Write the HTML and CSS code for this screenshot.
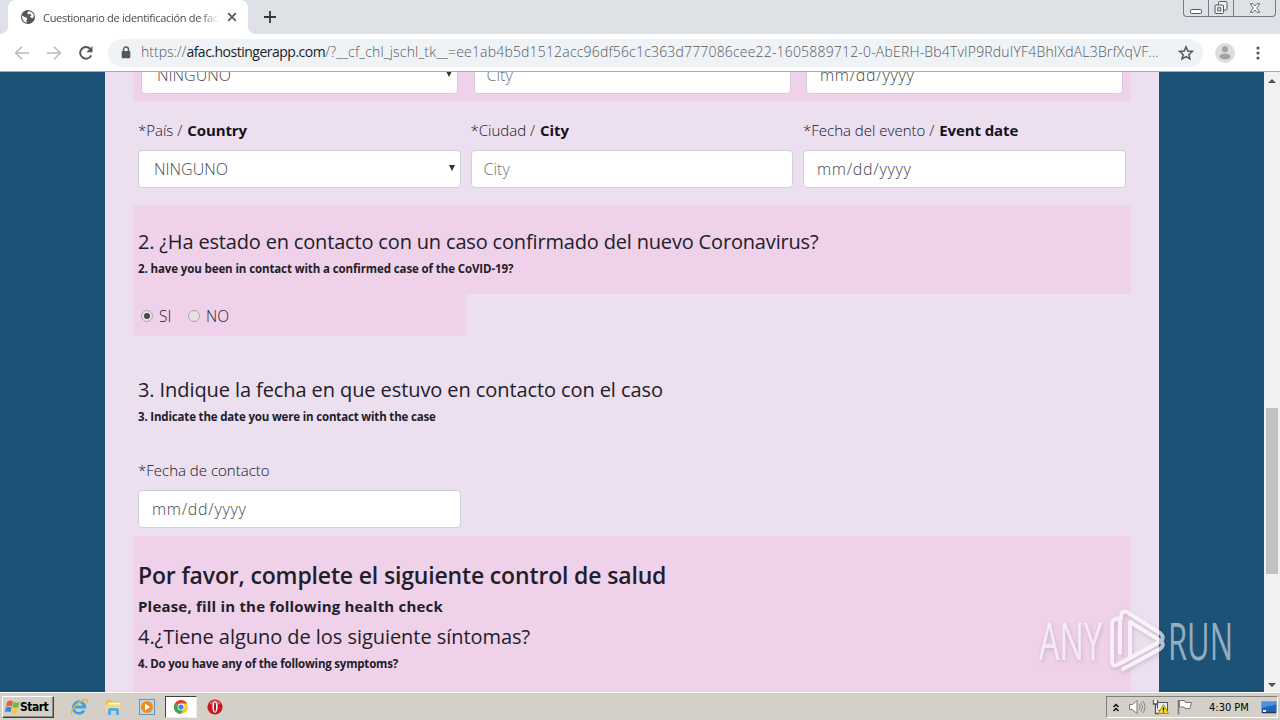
FILE: index.html
```html
<!DOCTYPE html>
<html lang="es">
<head>
<meta charset="utf-8">
<title>Cuestionario de identificación de factores</title>
<link rel="stylesheet" href="styles.css">
</head>
<body>
<div class="screen">
  <header class="tabstrip">
    <div class="tab-lead"></div>
    <div class="tab">
      <svg class="globe" viewBox="0 0 16 16"><circle cx="8" cy="8" r="7" fill="#55585c"/><path d="M2 6.500 4.600 8l2 .6.6 1.600-.8 1.300.4 2.200-1.600-.5C3.200 12 2 9.800 2 6.500ZM8.200 2.200l-1 2 1.600 1.200 1.600-.6 1 1.400-1.400 1.500 1.600 1.300 1.800-.2.400-2.600C13.300 4 11 2.200 8.200 2.200Z" fill="#fff"/></svg>
      <span class="tab-title">Cuestionario de identificación de fact</span>
      <svg class="tab-close" viewBox="0 0 10 10"><path d="M1.200 1.200l7.600 7.600M8.800 1.200 1.200 8.800" stroke="#55595d" stroke-width="1.700"/></svg>
    </div>
    <div class="tab-rest">
      <svg class="plus" viewBox="0 0 12 12"><path d="M6 0v12M0 6h12" stroke="#34383c" stroke-width="1.800"/></svg>
      <div class="winbtns">
        <span class="wb min"><svg viewBox="0 0 14 14"><rect x="1.500" y="8.500" width="11" height="4" rx="1" fill="#fff" stroke="#53565e"/></svg></span>
        <span class="wb"><svg viewBox="0 0 14 14"><g fill="#f2f3f6" stroke="#53565e"><rect x="4.500" y=".5" width="8.500" height="8.500" rx="1"/><rect x="1" y="4" width="8.500" height="8.500" rx="1"/><rect x="3.800" y="6.800" width="3" height="3"/></g></svg></span>
        <span class="wb close"><svg viewBox="0 0 14 14"><path d="M1.500 2h3.200L7 4.700 9.300 2h3.200L9 7l3.500 5H9.300L7 9.300 4.700 12H1.500L5 7Z" fill="#fff" stroke="#53565e"/></svg></span>
      </div>
    </div>
  </header>
  <nav class="toolbar">
    <svg class="nav" viewBox="0 0 16 16"><path d="M15 8H2M8 1.700 1.700 8 8 14.300" fill="none" stroke="#b9babc" stroke-width="1.600"/></svg>
    <svg class="nav" viewBox="0 0 16 16"><path d="M1 8h13M8 1.700 14.300 8 8 14.300" fill="none" stroke="#b9babc" stroke-width="1.600"/></svg>
    <svg class="nav" viewBox="0 0 16 16"><path d="M13.200 10.300A5.800 5.800 0 1 1 12.300 4" fill="none" stroke="#54585c" stroke-width="2"/><path d="M14.500 1v6.200H8.300Z" fill="#54585c"/></svg>
    <div class="omnibox">
      <svg class="lock" viewBox="0 0 10 13"><path d="M2.500 6V3.500a2.500 2.500 0 0 1 5 0V6" fill="none" stroke="#54585c" stroke-width="1.400"/><rect x=".7" y="5" width="8.600" height="7.300" rx="1" fill="#54585c"/></svg>
      <span class="url">https://<b>afac.hostingerapp.com</b><span class="query">/?__cf_chl_jschl_tk__=ee1ab4b5d1512acc96df56c1c363d777086cee22-1605889712-0-AbERH-Bb4TvIP9RduIYF4BhIXdAL3BrfXqVF…</span></span>
      <svg class="star" viewBox="0 0 16 16"><path d="m8 1.800 1.750 4.300 4.650.35-3.550 3 1.100 4.550L8 11.550 4.050 14l1.100-4.550-3.550-3 4.650-.35Z" fill="none" stroke="#54585c" stroke-width="1.500"/></svg>
    </div>
    <svg class="avatar" viewBox="0 0 20 20"><circle cx="10" cy="10" r="10" fill="#dcdddf"/><circle cx="10" cy="6.200" r="3" fill="#a2a3a5"/><ellipse cx="10" cy="13.500" rx="5.500" ry="3" fill="#a2a3a5"/></svg>
    <svg class="dots" viewBox="0 0 4 14"><g fill="#54585c"><circle cx="2" cy="2" r="1.600"/><circle cx="2" cy="7" r="1.600"/><circle cx="2" cy="12" r="1.600"/></g></svg>
  </nav>

  <div class="viewport">
    <div class="side"></div>
    <main class="page">
      <section class="prev pink">
        <div class="field select cut"><span>NINGUNO</span><i></i></div>
        <div class="field ph cut"><span>City</span></div>
        <div class="field date cut"><span>mm/dd/yyyy</span></div>
      </section>
      <section class="event">
        <div><label class="lbl">*País / <b>Country</b></label><div class="field select"><span>NINGUNO</span><i></i></div></div>
        <div><label class="lbl">*Ciudad / <b>City</b></label><div class="field ph"><span>City</span></div></div>
        <div><label class="lbl">*Fecha del evento / <b>Event date</b></label><div class="field date"><span>mm/dd/yyyy</span></div></div>
      </section>
      <section class="q2 pink">
        <h3 class="t2">2. ¿Ha estado en contacto con un caso confirmado del nuevo Coronavirus?</h3>
        <h6 class="s2">2. have you been in contact with a confirmed case of the CoVID-19?</h6>
      </section>
      <section class="radios pink">
        <span class="radio on"></span><span class="rl">SI</span>
        <span class="radio"></span><span class="rl">NO</span>
      </section>
      <section class="q3">
        <h3 class="t3">3. Indique la fecha en que estuvo en contacto con el caso</h3>
        <h6 class="s3">3. Indicate the date you were in contact with the case</h6>
        <label class="lbl">*Fecha de contacto</label>
        <div class="field date"><span>mm/dd/yyyy</span></div>
      </section>
      <section class="q4 pink">
        <h2>Por favor, complete el siguiente control de salud</h2>
        <h5>Please, fill in the following health check</h5>
        <h3 class="t5">4.¿Tiene alguno de los siguiente síntomas?</h3>
        <h6 class="s5">4. Do you have any of the following symptoms?</h6>
      </section>
    </main>
    <div class="side"></div>
    <div class="scroll"><i class="up"></i><div class="thumb"></div><i class="down"></i></div>
    <div class="mark">
      <svg width="210" height="80" viewBox="0 0 210 80">
        <g fill="#fff" font-family="'Open Sans'" font-size="51">
          <text class="wm shade" x="7" y="57.500" textLength="63" lengthAdjust="spacingAndGlyphs">ANY</text>
          <text class="wm dim" x="136" y="57.500" textLength="65" lengthAdjust="spacingAndGlyphs">RUN</text>
        </g>
        <g class="shade logo" fill="none" stroke="#fff" stroke-width="4" stroke-linejoin="round" stroke-linecap="round">
          <path d="M88 51V20q-1-5-5-3-3 2-3 5v37q0 6 5 4l44-24"/>
          <path d="M89 17v-3q0-6 6-4l33 21q5 4 1 8L98 20v34"/>
          <path d="M91 67l37-20q5-4 1-8L89 61"/>
        </g>
      </svg>
    </div>
  </div>

  <footer class="taskbar">
    <div class="start"><svg viewBox="0 0 16 16"><path d="M2.500 2.500q3-2.500 6-.5L7.300 7.500q-3-1.800-6.300 0Z" fill="#e9602f"/><path d="M9.300 2.500q3 2 6.700-.2L14.200 8q-3 1.800-6.200 0Z" fill="#72b843"/><path d="M.8 8.500q3.200-1.800 6.200 0l-1.200 5.200q-3-1.800-5.800 0Z" fill="#3d84d8"/><path d="M7.700 9q3 1.800 6.300 0l-1.500 5.300q-3 1.900-6 0Z" fill="#f6c832"/></svg><b>Start</b></div>
    <div class="quick">
      <svg viewBox="0 0 18 18"><path d="M14 12.500A5.800 5.800 0 1 1 14.800 9H5" fill="none" stroke="#3fa2e4" stroke-width="2.800"/><path d="M2 16.500C-1 13 8 3 15.500 1.500 18 1 17.500 3.500 16.500 5" fill="none" stroke="#e8b83a" stroke-width="1.300"/></svg>
      <svg viewBox="0 0 18 18"><path d="M2 2h5l1 1.500h7V14H2Z" fill="#dfbd58"/><path d="M4 4.500h12v3H4Z" fill="#fff3c0"/><path d="M1.500 6.500h15V14h-15Z" fill="#f3d983"/><path d="M4 17v-5q0-2 2-2h7q2 0 2 2v5h-3v-4H7v4Z" fill="#55aee3"/></svg>
      <svg viewBox="0 0 18 18"><rect x="1.500" y="1.500" width="15" height="15" fill="#b8d9f0" stroke="#5e9ac8"/><circle cx="9" cy="9" r="6" fill="#f48a1b"/><path d="m7 5.500 5 3.500-5 3.500Z" fill="#fff"/></svg>
      <span class="active"><svg viewBox="0 0 18 18"><circle cx="9" cy="9" r="7" fill="#f7cb31"/><path d="M9 9 2.900 5.500A7 7 0 0 1 15.100 5.500H9Z" fill="#dc4335"/><path d="M2.900 5.500A7 7 0 0 0 8.500 16L12 10.800 9 9Z" fill="#3aa457"/><circle cx="9" cy="9" r="3.400" fill="#fff"/><circle cx="9" cy="9" r="2.600" fill="#4482e8"/></svg></span>
      <svg viewBox="0 0 18 18"><circle cx="9" cy="9" r="7.600" fill="#c41920"/><path d="M3.500 5.500a6.500 6.500 0 0 1 11 0Q9 9 3.500 5.500Z" fill="#e46a68"/><ellipse cx="9" cy="9" rx="2.600" ry="5.700" fill="#fff"/><ellipse cx="9" cy="9" rx="1" ry="4.700" fill="#a90f18"/></svg>
    </div>
    <div class="tray">
      <svg class="chev" viewBox="0 0 8 10"><path d="m1.500 4.500 2.500-2.500 2.500 2.500M1.500 8.500 4 6l2.500 2.500" fill="none" stroke="#111" stroke-width="1.500"/></svg>
      <svg class="ti" viewBox="0 0 18 16"><path d="M1.500 5.500h3L9 1.500v13l-4.500-4h-3Z" fill="#fff" stroke="#777"/><path d="M11 5q2 3 0 6M13 3.500q3 4.500 0 9M15 2q4 6 0 12" fill="none" stroke="#888"/></svg>
      <svg class="ti" viewBox="0 0 18 16"><rect x="5.500" y="3.500" width="10" height="8" fill="#e8eef2" stroke="#555"/><path d="M1.500 1v4h4V1M3.500 5v9.500h4" fill="#fff" stroke="#555" stroke-width="1.300"/><path d="m11.500 5.500 5 9h-10Z" fill="#ffdc22" stroke="#b39100"/><path d="M11.500 8.500v3m0 1v1" stroke="#111" stroke-width="1.300"/></svg>
      <svg class="ti" viewBox="0 0 18 16"><path d="M2.500 1v14.500" stroke="#777" stroke-width="1.500"/><path d="M3.500 1.500h5l1 2h6l-1.500 6H9l-1-1.500H3.500Z" fill="#fff" stroke="#777"/></svg>
      <span class="clock">4:30 PM</span>
      <svg class="desk" viewBox="0 0 16 14"><rect x=".5" y="1.500" width="15" height="11" fill="#2463bd" stroke="#7da4c9"/><path d="M1 2h14v2.500L1 8Z" fill="#4b91df"/><path d="M1 12.500h14" stroke="#24394f" stroke-width="1.500"/><path d="M2 10h3v2H2Z" fill="#dceefa"/></svg>
    </div>
  </footer>
</div>
</body>
</html>
```
FILE: styles.css
```css
* { box-sizing: border-box; }
body { margin: 0; background: #1b5276; font-family: "Open Sans", "Noto Sans", sans-serif; color: #212029; }
svg { display: block; flex: none; }
h2, h3, h5, h6, label { display: block; margin: 0; white-space: nowrap; }
.screen { width: 1280px; height: 720px; overflow: hidden; display: flex; flex-direction: column; }

.tabstrip { height: 34px; flex: none; display: flex; background: #fff; }
.tab-lead { width: 8px; background: #dee1e6; border-bottom-right-radius: 7px; }
.tab { width: 240px; display: flex; align-items: center; padding: 0 11px 0 12px; background: #fff; border-radius: 8px 8px 0 0; box-shadow: 0 -8px 0 #dee1e6; }
.globe { width: 16px; height: 16px; }
.tab-title { width: 180px; margin-left: 7px; white-space: nowrap; font-size: 11px; letter-spacing: -.3px; color: #45494d; -webkit-mask-image: linear-gradient(90deg, #000 158px, transparent 176px); mask-image: linear-gradient(90deg, #000 158px, transparent 176px); }
.tab-close { width: 10px; height: 10px; margin-left: 5px; }
.tab-rest { flex: 1; display: flex; justify-content: space-between; background: #dee1e6; border-bottom-left-radius: 7px; padding: 0 4px 0 16px; }
.plus { width: 12px; height: 12px; margin-top: 11px; }
.winbtns { display: flex; height: 17px; border: 1px solid #777b87; border-top: 0; border-radius: 0 0 4px 4px; width: 93px; overflow: hidden; }
.wb { width: 25px; display: flex; justify-content: center; align-items: center; border-right: 1px solid #777b87; }
.wb svg { width: 14px; height: 14px; }
.wb.close { width: 41px; border: 0; }
.wb.close svg { width: 12px; height: 12px; }

.toolbar { height: 38px; flex: none; display: flex; align-items: center; background: #fff; border-bottom: 1px solid #a9aaad; padding: 0 20px 0 14px; }
.nav { width: 16px; height: 16px; margin-right: 16px; }
.omnibox { width: 1095px; height: 28px; margin-left: -2px; border-radius: 14px; background: #f0f3f5; display: flex; align-items: center; padding: 0 9px 0 13px; }
.lock { width: 10px; height: 13px; }
.url { width: 1026px; margin-left: 10px; margin-top: -2px; font-size: 14px; font-weight: 300; white-space: nowrap; color: #55595e; }
.url b { font-weight: 400; color: #202124; letter-spacing: -.5px; }
.query { letter-spacing: .18px; }
.star { width: 16px; height: 16px; margin-left: auto; }
.avatar { width: 20px; height: 20px; margin-left: 12px; }
.dots { width: 4px; height: 14px; margin-left: auto; }

.viewport { height: 620px; flex: none; display: flex; position: relative; overflow: hidden; background: #1b5276; }
.side { width: 105px; }
.page { width: 1054px; background: #ebdff0; padding: 0 28px; }
.pink { background: #efd1ea; }
.prev { height: 29px; display: grid; grid-template-columns: repeat(3, 317px); gap: 15.500px; padding: 0 8px; overflow: hidden; }
.event { height: 104px; padding: 18px 5px 0; display: grid; grid-template-columns: repeat(3, 322.500px); gap: 10px; align-items: start; }
.lbl { font-size: 15px; font-weight: 300; height: 31px; line-height: 22px; color: #16131c; }
.lbl b { font-weight: 700; letter-spacing: -.1px; margin-left: 1px; }
.field { height: 38px; background: #fff; border: 1px solid #d0cfdb; border-radius: 4px; padding: 0 12px; display: flex; align-items: center; justify-content: space-between; font-size: 16px; font-weight: 300; color: #42484e; line-height: 22px; }
.cut { margin-top: -16px; }
.select { padding: 0 5px 0 15px; }
.select i { width: 0; border: 3px solid transparent; border-top: 6px solid #333; border-bottom: 0; margin-top: -2px; }
.date { padding-left: 13px; letter-spacing: .7px; }
.date span { margin-top: -1px; }
.ph { color: #6c757d; }
.q2 { height: 89px; padding: 25px 5px 0; }
h3 { font-size: 20px; font-weight: 400; line-height: 24px; }
h6 { font-size: 11.500px; font-weight: 700; line-height: 14px; margin-top: 8px; }
.t2 { letter-spacing: -.17px; }
.t3 { letter-spacing: -.09px; }
.t5 { letter-spacing: -.05px; }
.s2 { letter-spacing: -.11px; }
.s3 { letter-spacing: -.17px; }
.s5 { letter-spacing: -.2px; }
.radios { width: 333px; height: 42px; display: flex; align-items: center; padding: 2px 8px 0; font-size: 15.500px; font-weight: 300; }
.radio { width: 12px; height: 12px; border-radius: 50%; background: #e5e3e6; border: 1px solid #aaa6ae; display: flex; align-items: center; justify-content: center; }
.radio.on::after { content: ""; width: 6px; height: 6px; border-radius: 50%; background: #4c484f; }
.rl { width: 29px; margin: 0 0 0 6px; }
.q3 { height: 200px; padding: 42px 5px 0; }
.q3 .lbl { margin-top: 35px; }
.q3 .field { width: 323px; }
.q4 { height: 156px; padding: 24px 5px 0; }
h2 { font-size: 23px; font-weight: 600; line-height: 30px; letter-spacing: -.16px; }
h5 { font-size: 15px; font-weight: 700; line-height: 20px; margin-top: 6px; letter-spacing: .2px; }
.q4 h3 { margin-top: 9px; }
.scroll { width: 16px; background: #f1f1f1; display: flex; flex-direction: column; align-items: center; padding: 7px 0 5px; }
.up, .down { border: 4px solid transparent; border-top: 0; border-bottom: 4px solid #505050; }
.down { border-bottom: 0; border-top: 4px solid #505050; margin-top: auto; }
.thumb { width: 12px; height: 166px; margin-top: 325px; background: #c1c1c1; }
.mark { position: absolute; left: 1032px; top: 530px; }
.wm { font-weight: 400; fill-opacity: .68; }
.dim { fill-opacity: .55; }
.shade { filter: drop-shadow(1px 2px 2px rgba(80, 50, 90, .3)); }
.logo { opacity: .65; }

.taskbar { height: 28px; flex: none; background: #d4d0c8; border-top: 1px solid #fff; display: flex; align-items: center; padding: 1px 2px 0; }
.start { width: 52px; height: 22px; display: flex; align-items: center; padding-left: 2px; border: 1px solid; border-color: #fff #404040 #404040 #fff; box-shadow: inset -1px -1px #8c9089; }
.start svg { width: 15px; height: 16px; }
.start b { font: 700 12px "DejaVu Sans Condensed", sans-serif; letter-spacing: -.5px; color: #000; margin-left: 0; }
.quick { display: flex; align-items: center; margin-left: 16px; gap: 16px; }
.quick svg { width: 18px; height: 18px; }
.active { width: 32px; height: 22px; margin: 0 -7px; background: #fff; border: 1px solid; border-color: #404040 #eee #eee #404040; display: flex; align-items: center; justify-content: center; }
.tray { width: 172px; height: 22px; margin-left: auto; border: 1px solid; border-color: #808080 #fff #fff #808080; display: flex; align-items: center; padding-left: 5px; }
.chev { width: 8px; height: 11px; margin-right: 8px; }
.ti { width: 18px; height: 16px; margin-right: 6px; }
.clock { font: 11px "DejaVu Sans Condensed", sans-serif; color: #000; margin-left: 9px; white-space: nowrap; }
.desk { width: 16px; height: 14px; margin-left: auto; }
```
